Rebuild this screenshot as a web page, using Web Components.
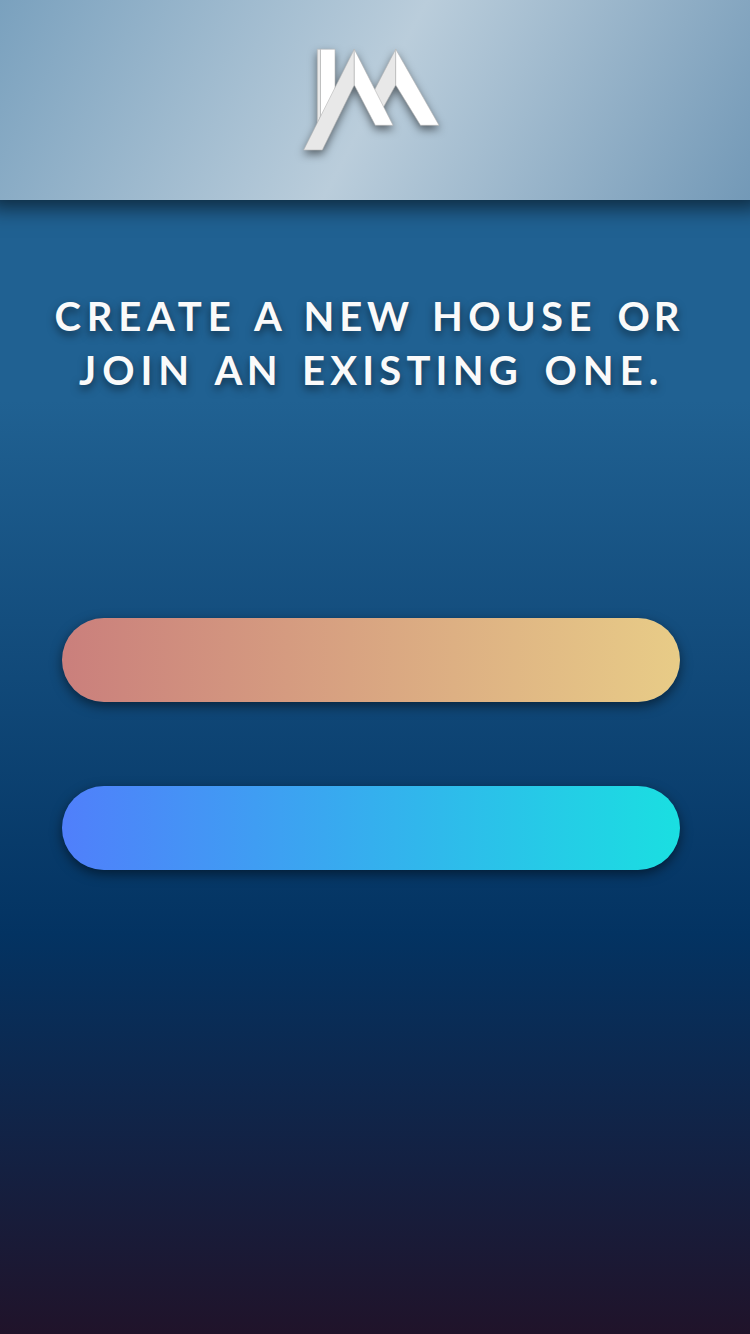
<!DOCTYPE html>
<html lang="en">
<head>
<meta charset="utf-8">
<title>House setup</title>
<style>
html,body{margin:0;padding:0}
</style>
</head>
<body>
<house-screen>
  <brand-header><brand-logo></brand-logo></brand-header>
  <screen-title>
    <title-line style="--inset:54.5px;--columns:199.500px 49.5px 128.5px 185.5px auto">
      <span style="letter-spacing:5.8px">CREATE </span>
      <span>A </span>
      <span style="letter-spacing:4.9px">NEW </span>
      <span style="letter-spacing:5.4px">HOUSE </span>
      <span style="letter-spacing:4px">OR</span>
    </title-line>
    <title-line style="--inset:79px;--columns:135.5px 87.5px 242.5px auto">
      <span style="letter-spacing:6px">JOIN </span>
      <span style="letter-spacing:4.5px">AN </span>
      <span style="letter-spacing:5.2px">EXISTING </span>
      <span style="letter-spacing:6px">ONE.</span>
    </title-line>
  </screen-title>
  <pill-button aria-label="Create" style="--from:#ca7f7c;--to:#e8cc87"></pill-button>
  <pill-button aria-label="Join" style="--from:#507ffb;--to:#1adfe1"></pill-button>
</house-screen>
<script>
const define = (name, html) => customElements.define(name, class extends HTMLElement {
  constructor() {
    super();
    this.attachShadow({ mode: "open" }).innerHTML = html;
  }
});

define("house-screen", `
<style>
:host{display:flex;flex-direction:column;align-items:center;box-sizing:border-box;width:750px;height:1334px;overflow:hidden;
background:linear-gradient(180deg,#206192 0,#206192 400px,#033362 934px,#20132a 1334px)}
::slotted(brand-header){flex:none}
::slotted(screen-title){margin-top:89px}
::slotted(pill-button){margin:0 8px 84px 0}
</style><slot></slot>`);

define("brand-header", `
<style>
:host{display:flex;justify-content:center;box-sizing:border-box;width:750px;height:200px;padding-top:40px;
background:linear-gradient(117.7deg,#7aa1be 0%,#bacddb 50%,#7399b7 100%);
box-shadow:0 -4px 20px 12px rgba(0,0,0,.58)}
</style><slot></slot>`);

define("brand-logo", `
<style>
:host{display:block;width:160px;height:130px}
svg{display:block;overflow:visible;filter:drop-shadow(0 4px 4px rgba(0,0,0,.5))}
</style>
<svg width="160" height="130" viewBox="295 40 160 130" stroke-width=".6" stroke="#b5b5b5">
  <path fill="#fff" d="M320.500 49.200H335V92L320.500 118Z"/>
  <path fill="#e8e8e8" d="M317.300 49.200H320.500V116L317.300 124Z"/>
  <path fill="#e8e8e8" d="M395.700 49.200V85L383 108L374 91Z"/>
  <path fill="#fff" d="M395.700 49.200L439 125.300H420.500L395.700 85Z"/>
  <path fill="#e8e8e8" d="M354.300 49.200V85L322.300 150H303.700Z"/>
  <path fill="#fff" d="M354.300 49.200L393 125.300H375.300L354.300 85Z"/>
</svg>`);

define("screen-title", `
<style>
:host{display:flex;flex-direction:column;box-sizing:border-box;width:750px;height:329px;
color:#fafafa;font:700 40px/54px Lato,"Liberation Sans",sans-serif;text-shadow:0 4px 8px rgba(0,0,0,.5)}
</style><slot></slot>`);

define("title-line", `
<style>
:host{display:grid;grid-template-columns:var(--columns);padding-left:var(--inset);white-space:nowrap}
</style><slot></slot>`);

define("pill-button", `
<style>
:host{display:block;flex:none;width:618px;height:84px;border-radius:42px;
background:linear-gradient(90deg,var(--from),var(--to));
box-shadow:0 4px 12px rgba(0,0,0,.5)}
</style><slot></slot>`);
</script>
</body>
</html>
